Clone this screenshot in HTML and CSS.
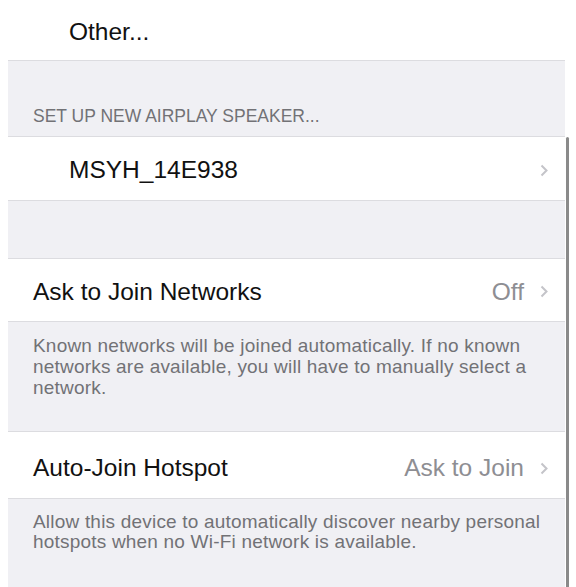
FILE: index.html
```html
<!DOCTYPE html>
<html lang="en">
<head>
  <meta charset="UTF-8" />
  <meta name="viewport" content="width=device-width, initial-scale=1" />
  <title>Wi-Fi</title>
  <link rel="stylesheet" href="styles.css">
</head>
<body>
  <div class="page">
    <div class="row row-other">
      <span class="label indent">Other...</span>
    </div>

    <div class="group-header">Set up new AirPlay speaker...</div>

    <div class="row row-speaker">
      <span class="label indent">MSYH_14E938</span>
      <svg class="chevron" viewBox="0 0 8 13"><path d="M1.5 1.5 L6.5 6.5 L1.5 11.5"/></svg>
    </div>

    <div class="spacer"></div>

    <div class="row row-ask">
      <span class="label">Ask to Join Networks</span>
      <span class="value">Off</span>
      <svg class="chevron" viewBox="0 0 8 13"><path d="M1.5 1.5 L6.5 6.5 L1.5 11.5"/></svg>
    </div>
    <div class="footer footer-ask">
      Known networks will be joined automatically. If no known networks are available, you will have to manually select a network.
    </div>

    <div class="row row-hotspot">
      <span class="label">Auto-Join Hotspot</span>
      <span class="value">Ask to Join</span>
      <svg class="chevron" viewBox="0 0 8 13"><path d="M1.5 1.5 L6.5 6.5 L1.5 11.5"/></svg>
    </div>
    <div class="footer footer-hotspot">
      Allow this device to automatically discover nearby personal hotspots when no Wi-Fi network is available.
    </div>
  </div>

  <!-- scroll indicator -->
  <div class="scrollbar"></div>
</body>
</html>
```

FILE: styles.css
```css
:root {
  --bg-group: #f0f0f4;
  --bg-cell: #fff;
  --line: #dcdce0;
  --text: #111;
  --text-muted: #727276;
  --value: #8e8e93;
  --chevron: #c4c4c9;
}

body {
  margin: 0;
  background: #fff;
  font-family: 'Liberation Sans', Arial, sans-serif;
  color: var(--text);
  position: relative;
  height: 587px;
  overflow: hidden;
}

.page {
  margin-left: 8px;
  width: 557px;
  background: var(--bg-group);
}

.row {
  display: flex;
  align-items: center;
  background: var(--bg-cell);
  padding: 0 17px 0 25px;
  font-size: 24.5px;
  border-bottom: 1px solid var(--line);
  box-sizing: border-box;
}

.label {
  flex: 1;
}

.indent {
  padding-left: 36px;
}

.value {
  color: var(--value);
  margin-right: 16px;
}

.chevron {
  width: 8px;
  height: 13px;
  fill: none;
  stroke: var(--chevron);
  stroke-width: 2;
}

.row-other {
  height: 61px;
  padding-top: 3px;
}

.group-header {
  height: 76px;
  box-sizing: border-box;
  padding: 45px 0 0 25px;
  font-size: 17.5px;
  text-transform: uppercase;
  color: var(--text-muted);
  border-bottom: 1px solid var(--line);
}

.row-speaker {
  height: 64px;
  padding-top: 3px;
}

.spacer {
  height: 57px;
  border-bottom: 1px solid var(--line);
}

.row-ask {
  height: 63px;
  padding-top: 3px;
}

.footer {
  padding: 13px 17px 0 25px;
  font-size: 19px;
  letter-spacing: 0.2px;
  line-height: 21px;
  color: var(--text-muted);
}

.footer-ask {
  height: 110px;
  box-sizing: border-box;
  border-bottom: 1px solid var(--line);
}

.row-hotspot {
  height: 67px;
  padding-top: 6px;
}

.footer-hotspot {
  height: 88px;
  box-sizing: border-box;
  padding-top: 13px;
  line-height: 20px;
}

.scrollbar {
  position: absolute;
  left: 566px;
  top: 137px;
  bottom: 0;
  width: 3px;
  background: #8a8a8a;
  border-radius: 2px 2px 0 0;
}
```
